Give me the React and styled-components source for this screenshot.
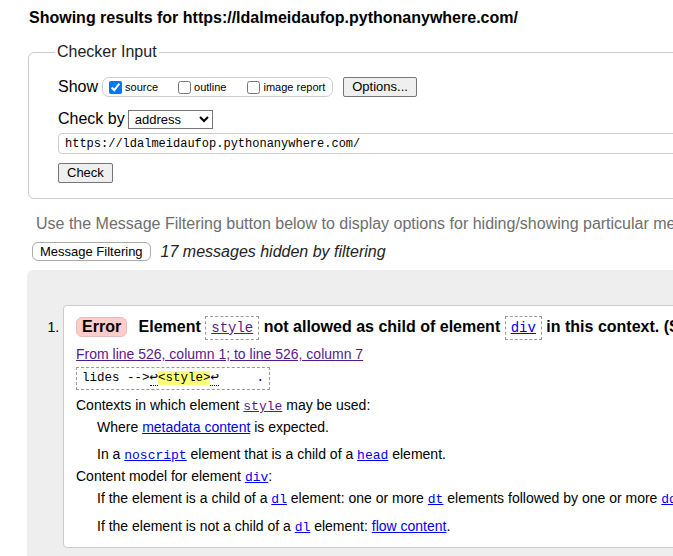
import React from "react";
import styled, { createGlobalStyle } from "styled-components";

const GlobalStyle = createGlobalStyle`
  html, body {
    margin: 0;
    padding: 0;
    overflow: hidden;
    background: #fff;
  }
  body {
    font-family: "Liberation Sans", Arial, sans-serif;
    color: #000;
  }
`;

const Page = styled.div`
  width: 1000px;
  padding-left: 28px;
`;

const Heading = styled.h2`
  margin: 8px 0 0 1px;
  font-size: 16px;
  line-height: 20px;
  font-weight: bold;
`;

const Fieldset = styled.fieldset`
  margin: 15px 0 0 0;
  padding: 16px 0 15px 29px;
  border: 1px solid #ccc;
  border-radius: 6px;
  min-width: 0;
`;

const Legend = styled.legend`
  margin-left: -3px;
  padding: 0 2px;
  font-size: 16px;
  color: #222;
`;

const Row = styled.div`
  display: flex;
  align-items: center;
  height: 20px;
  margin-top: ${(p) => p.$mt || 0}px;
  font-size: 16px;
`;

const RowLabel = styled.span`
  margin-right: ${(p) => p.$gap || 4}px;
`;

const OptionGroup = styled.div`
  display: flex;
  align-items: center;
  height: 18px;
  padding: 0 7px 0 2px;
  border: 1px solid #ccc;
  border-radius: 7px;
`;

const Option = styled.label`
  display: flex;
  align-items: center;
  font-size: 11px;
  margin-right: ${(p) => p.$mr || 0}px;
`;

const Box = styled.input`
  width: 13px;
  height: 13px;
  margin: 0 3px 0 4px;
  accent-color: #0075ff;
`;

const Button = styled.button`
  font-family: "Liberation Sans", Arial, sans-serif;
  font-size: 13px;
  height: 20px;
  padding: 0 ${(p) => p.$px || 8}px;
  margin-left: ${(p) => p.$ml || 0}px;
  color: #000;
  background: #efefef;
  border: 1px solid #767676;
  border-radius: 2px;
  line-height: 18px;
`;

const Select = styled.select`
  font-family: "Liberation Sans", Arial, sans-serif;
  font-size: 13px;
  width: 85px;
  height: 19px;
  padding: 0 0 0 2px;
  color: #000;
  background: #fff;
  border: 1px solid #767676;
  border-radius: 0;
`;

const UrlInput = styled.input`
  display: block;
  box-sizing: border-box;
  width: 100%;
  height: 21px;
  margin-top: 4px;
  padding: 0 6px;
  font-family: "Liberation Mono", "Courier New", monospace;
  font-size: 12px;
  color: #000;
  border: 1px solid #ccc;
  border-radius: 4px;
`;

const CheckRow = styled.div`
  margin-top: 9px;
`;

const Hint = styled.p`
  margin: 16px 0 0 8px;
  font-size: 16px;
  line-height: 18px;
  color: #6e6e6e;
  white-space: nowrap;
`;

const FilterRow = styled.div`
  display: flex;
  align-items: center;
  margin: 9px 0 0 4px;
  height: 19px;
`;

const FilterButton = styled.button`
  font-family: "Liberation Sans", Arial, sans-serif;
  font-size: 13px;
  height: 19px;
  padding: 0 7px;
  color: #000;
  background: #fff;
  border: 1px solid #aaa;
  border-radius: 6px;
  line-height: 17px;
`;

const HiddenNote = styled.span`
  margin-left: 10px;
  font-size: 16px;
  font-style: italic;
  color: #222;
`;

const Results = styled.div`
  margin: 9px 0 0 -1px;
  padding: 35px 0 40px 0;
  background: #eee;
  border-radius: 6px 0 0 0;
`;

const MessageList = styled.ol`
  margin: 0;
  padding: 0 0 0 36px;
  font-size: 14px;
`;

const Message = styled.li`
  background: #fff;
  border: 1px solid #ccc;
  border-radius: 4px;
  padding: 8px 13px 9px 12px;
`;

const Summary = styled.p`
  margin: 0;
  font-size: 16px;
  font-weight: bold;
  line-height: 26px;
  white-space: nowrap;
`;

const Badge = styled.strong`
  display: inline-block;
  padding: 0 5px;
  margin-right: 7px;
  line-height: 18px;
  color: #000;
  background: #fcc;
  border: 1px solid #e6bcbc;
  border-radius: 6px;
`;

const CodeBox = styled.code`
  display: inline-block;
  padding: 0 5px;
  line-height: 22px;
  border: 1px dashed #999;
  font-family: "Liberation Mono", "Courier New", monospace;
  font-size: 14px;
  font-weight: normal;
`;

const Link = styled.a`
  color: ${(p) => (p.$visited ? "#551a8b" : "#0000ee")};
  text-decoration: underline;
`;

const Mono = styled(Link)`
  font-family: "Liberation Mono", "Courier New", monospace;
  font-size: 13px;
`;

const Location = styled.p`
  margin: 4px 0 0 0;
  line-height: 20px;
`;

const Extract = styled.p`
  margin: 3px 0 0 0;
  display: inline-block;
  padding: 0 5px;
  height: 21px;
  line-height: 21px;
  border: 1px dashed #999;
  font-family: "Liberation Mono", "Courier New", monospace;
  font-size: 12.5px;
  white-space: pre;
`;

const LineFeed = styled.span`
  font-size: 14px;
  line-height: 1;
  border-bottom: 1px dotted #000;
`;

const Mark = styled.b`
  font-weight: normal;
  background: #ffff77;
`;

const Details = styled.dl`
  margin: 5px 0 0 0;
  line-height: 21px;
`;

const Term = styled.dt`
  margin: 0;
`;

const Desc = styled.dd`
  margin: 0 0 0 21px;
  white-space: nowrap;

  p {
    margin: 0;
  }
  p + p {
    margin-top: 6px;
  }
`;

export default function App() {
  return (
    <>
      <GlobalStyle />
      <Page>
        <Heading>Showing results for https://ldalmeidaufop.pythonanywhere.com/</Heading>
        <Fieldset>
          <Legend>Checker Input</Legend>
          <Row>
            <RowLabel>Show</RowLabel>
            <OptionGroup>
              <Option $mr={16}>
                <Box type="checkbox" defaultChecked />
                source
              </Option>
              <Option $mr={17}>
                <Box type="checkbox" />
                outline
              </Option>
              <Option>
                <Box type="checkbox" />
                image report
              </Option>
            </OptionGroup>
            <Button $ml={10} $px={8}>Options...</Button>
          </Row>
          <Row $mt={12}>
            <RowLabel $gap={3}>Check by</RowLabel>
            <Select defaultValue="address">
              <option value="address">address</option>
              <option value="file">file upload</option>
              <option value="text">text input</option>
            </Select>
          </Row>
          <UrlInput readOnly value="https://ldalmeidaufop.pythonanywhere.com/" />
          <CheckRow>
            <Button $px={8}>Check</Button>
          </CheckRow>
        </Fieldset>

        <Hint>
          Use the Message Filtering button below to display options for hiding/showing particular messages, and to see total counts of errors and warnings.
        </Hint>
        <FilterRow>
          <FilterButton>Message Filtering</FilterButton>
          <HiddenNote>17 messages hidden by filtering</HiddenNote>
        </FilterRow>

        <Results>
          <MessageList>
            <Message>
              <Summary>
                <Badge>Error</Badge> Element{" "}
                <CodeBox>
                  <Link $visited href="#style">style</Link>
                </CodeBox>{" "}
                not allowed as child of element{" "}
                <CodeBox>
                  <Link href="#div">div</Link>
                </CodeBox>{" "}
                in this context. (Suppressing further errors from this subtree.)
              </Summary>
              <Location>
                <Link $visited href="#l526">From line 526, column 1; to line 526, column 7</Link>
              </Location>
              <Extract>
                {"lides -->"}
                <LineFeed>↩</LineFeed>
                <Mark>{"<style>"}</Mark>
                <LineFeed>↩</LineFeed>
                {"     ."}
              </Extract>
              <Details>
                <Term>
                  Contexts in which element <Mono $visited href="#style">style</Mono> may be used:
                </Term>
                <Desc>
                  <p>
                    Where <Link href="#metadata">metadata content</Link> is expected.
                  </p>
                  <p>
                    In a <Mono href="#noscript">noscript</Mono> element that is a child of a{" "}
                    <Mono href="#head">head</Mono> element.
                  </p>
                </Desc>
                <Term>
                  Content model for element <Mono href="#div">div</Mono>:
                </Term>
                <Desc>
                  <p>
                    If the element is a child of a <Mono href="#dl">dl</Mono> element: one or more{" "}
                    <Mono href="#dt">dt</Mono> elements followed by one or more <Mono href="#dd">dd</Mono>{" "}
                    elements, optionally intermixed with <Link href="#script">script-supporting elements</Link>.
                  </p>
                  <p>
                    If the element is not a child of a <Mono href="#dl">dl</Mono> element:{" "}
                    <Link href="#flow">flow content</Link>.
                  </p>
                </Desc>
              </Details>
            </Message>
          </MessageList>
        </Results>
      </Page>
    </>
  );
}
